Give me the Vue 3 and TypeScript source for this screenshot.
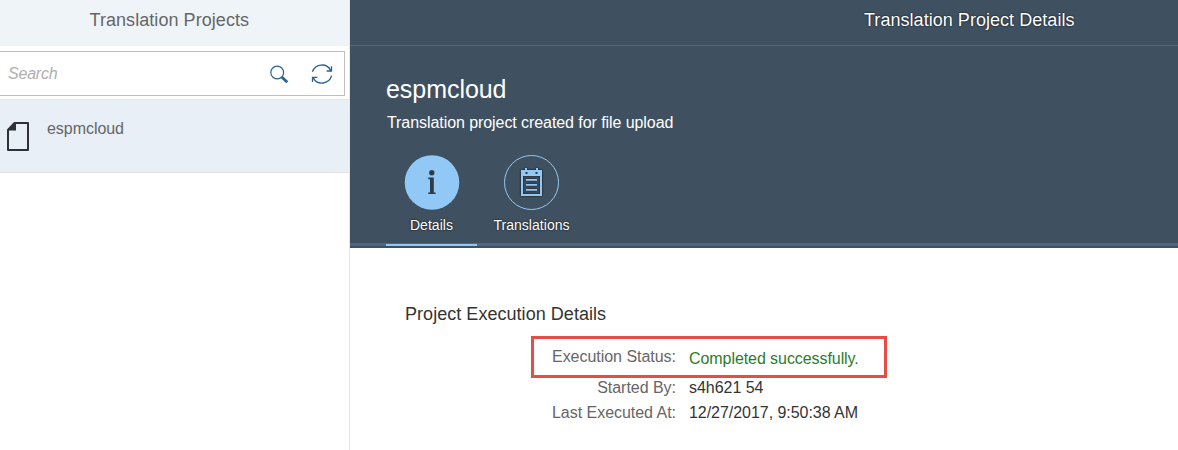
<script setup lang="ts">
interface Field {
  label: string
  value: string
  highlighted?: boolean
}

const fields: Field[] = [
  { label: 'Execution Status:', value: 'Completed successfully.', highlighted: true },
  { label: 'Started By:', value: 's4h621 54' },
  { label: 'Last Executed At:', value: '12/27/2017, 9:50:38 AM' },
]
</script>

<template>
  <div class="app">
    <aside class="master">
      <header class="master-bar"><span>Translation Projects</span></header>
      <div class="search-wrap">
        <div class="search">
          <span class="placeholder">Search</span>
          <svg class="ic-search" width="20" height="20" viewBox="0 0 20 20" fill="none" stroke="#2c6291">
            <circle cx="8.2" cy="7.5" r="6.4" stroke-width="1.2" />
            <path d="M12.7 12 L18.3 17.3" stroke-width="2.8" />
          </svg>
          <svg class="ic-refresh" width="22" height="22" viewBox="0 0 22 22" fill="none" stroke="#2c6291" stroke-width="1.3">
            <path d="M1.4 7.7 A10 10 0 0 1 19.8 6.6 M20.5 2.2 V7 H15.6" />
            <path d="M20.6 11.7 A10 10 0 0 1 2.2 13.9 M1.5 18 V13.4 H6.4" />
          </svg>
        </div>
      </div>
      <div class="item">
        <svg width="24" height="30" viewBox="0 0 24 30">
          <path d="M8.5 2 H22 V29 H2 V9 Z" fill="none" stroke="#2f3136" stroke-width="2" stroke-linejoin="round" />
          <path d="M8.4 1.5 H10 V9.6 H1.5 V8.2 Z" fill="#2f3136" />
        </svg>
        <span class="item-title">espmcloud</span>
      </div>
    </aside>
    <main class="detail">
      <header class="detail-bar"><span>Translation Project Details</span></header>
      <section class="object-header">
        <h1>espmcloud</h1>
        <p>Translation project created for file upload</p>
        <nav class="tabs">
          <div class="tab selected">
            <svg width="56" height="56" viewBox="0 0 56 56">
              <circle cx="28" cy="27.5" r="27.3" fill="#91c8f6" />
              <circle cx="27.8" cy="17.8" r="2.7" fill="#2f3c48" />
              <path d="M24.2 22.6 H29.8 V37.4 H31.6 V39 H24.2 V37.4 H26 V24.2 H24.2 Z" fill="#2f3c48" />
            </svg>
            <span>Details</span>
          </div>
          <div class="tab second">
            <svg width="56" height="56" viewBox="0 0 56 56">
              <circle cx="27.5" cy="27.5" r="27" fill="none" stroke="#91c8f6" stroke-width="1" />
              <g class="notes">
                <rect x="18" y="16" width="19" height="24" fill="none" stroke="#91c8f6" stroke-width="2" />
                <path d="M17 15 H38 V21 H17 Z M21 13 H23 V16 H21 Z M32 13 H34 V16 H32 Z" fill="#91c8f6" />
                <path d="M22 24.8 H33 M22 29.8 H33 M22 34.8 H33" stroke="#91c8f6" stroke-width="1.8" />
              </g>
              <path d="M21.5 17 H23.5 V19 H21.5 Z M31.5 17 H33.5 V19 H31.5 Z" fill="#2f3c48" />
            </svg>
            <span>Translations</span>
          </div>
        </nav>
      </section>
      <section class="content">
        <h2>Project Execution Details</h2>
        <dl>
          <div v-for="f in fields" :key="f.label" class="field" :class="{ highlighted: f.highlighted }">
            <dt>{{ f.label }}</dt>
            <dd>{{ f.value }}</dd>
          </div>
        </dl>
      </section>
    </main>
  </div>
</template>

<style>
html, body { margin: 0; background: #fff; overflow: hidden; }
</style>

<style scoped>
* { box-sizing: border-box; }
.app { display: flex; width: 1178px; height: 450px; overflow: hidden; font-family: "Liberation Sans", Arial, sans-serif; font-size: 16px; color: #333; }
.master { width: 350px; flex: none; border-right: 1px solid #e4e6e8; }
.master-bar { height: 46px; padding: 9px 0 0 89.5px; background: #eff4f9; color: #666; font-size: 18px; line-height: 22px; letter-spacing: 0.06px; }
.search-wrap { height: 54px; padding-top: 5px; border-bottom: 1px solid #e5e5e5; }
.search { display: flex; width: 345px; height: 45px; border: 1px solid #bfbfbf; border-left: 0; }
.placeholder { width: 269px; padding: 12px 0 0 8px; color: #b0b0b0; font-style: italic; line-height: 20px; letter-spacing: -0.2px; }
.ic-search { margin: 13px 23px 0 0; flex: none; }
.ic-refresh { margin: 12px 0 0 -1px; flex: none; }
.item { display: flex; height: 73px; padding: 21px 0 0 6px; background: #e8eff6; border-bottom: 1px solid #e3e3e3; }
.item-title { margin: -2px 0 0 17px; line-height: 20px; color: #666; letter-spacing: -0.05px; }
.detail { flex: 1; min-width: 0; }
.detail-bar { height: 46px; padding: 9px 0 0 514px; background: #3f5161; border-bottom: 1px solid #53687b; color: #fff; font-size: 18px; line-height: 22px; letter-spacing: 0.04px; text-shadow: 0 0 2px #000; }
.object-header { height: 202px; padding: 28px 0 0 36px; background: #3f5161; color: #fff; }
h1 { margin: 0; font-size: 25px; font-weight: 400; line-height: 30px; letter-spacing: -0.05px; }
p { margin: 9px 0 0; padding-left: 1px; line-height: 20px; letter-spacing: -0.07px; }
.tabs { display: flex; height: 91px; margin: 22px 0 0 -36px; padding-left: 36px; border-bottom: 3px solid #4f687e; font-size: 14px; }
.tab { display: flex; flex-direction: column; align-items: center; text-shadow: 0 0 2px #000; }
.tab svg { display: block; }
.tab span { margin-top: 6px; line-height: 17px; letter-spacing: 0.04px; }
.notes { filter: drop-shadow(0 0 1px rgba(0, 0, 0, 0.8)); }
.selected { width: 91px; height: 91px; border-bottom: 2px solid #91c8f6; }
.second { width: 109px; }
.content { padding: 55px 0 0 55px; }
h2 { margin: 0; font-size: 18px; font-weight: 400; line-height: 22px; letter-spacing: 0.04px; }
dl { margin: 11px 0 0 126px; width: 356px; }
.field { display: flex; height: 25px; line-height: 20px; padding-left: 3px; }
.field.highlighted { height: 42px; border: 3px solid #e84c47; padding: 8px 0 0; }
dt { width: 142px; text-align: right; color: #666; white-space: nowrap; letter-spacing: -0.03px; }
dd { margin: 0 0 0 13px; white-space: nowrap; letter-spacing: -0.04px; }
.highlighted dd { color: #2b7c2b; padding-top: 2px; letter-spacing: -0.07px; }
</style>
